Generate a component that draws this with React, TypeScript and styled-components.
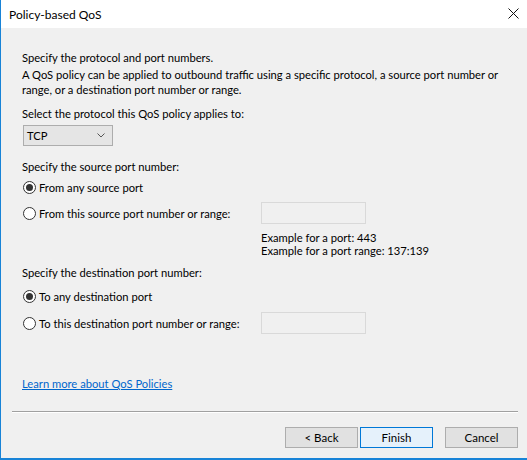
import React from "react";
import styled, { createGlobalStyle } from "styled-components";

const Global = createGlobalStyle`
  html, body { margin: 0; padding: 0; background: #ffffff; }
  body { font-family: Lato, "Noto Sans", sans-serif; font-size: 11.2px; color: #000; }
  * { box-sizing: border-box; }
`;

const Window = styled.div`
  width: 527px;
  height: 460px;
  display: flex;
  flex-direction: column;
  border-left: 1px solid #1883d7;
  border-bottom: 2px solid #1883d7;
  background: #f0f0f0;
  overflow: hidden;
`;

const TitleBar = styled.div`
  height: 28px;
  flex: none;
  background: #ffffff;
  display: flex;
  align-items: center;
  justify-content: space-between;
  padding: 0 8px 0 8px;
`;

const Title = styled.span`
  font-size: 12px;
  color: #000;
`;

const Close = styled.button`
  width: 12px;
  height: 12px;
  padding: 0;
  border: none;
  background: transparent;
  display: flex;
  align-items: center;
  justify-content: center;
  margin-top: -2px;
`;

const Content = styled.div`
  flex: 1;
  display: flex;
  flex-direction: column;
  padding: 0 0 0 21px;
`;

const Text = styled.div<{ $mt: number }>`
  margin-top: ${(p) => p.$mt}px;
  line-height: 15px;
  white-space: nowrap;
`;

const Combo = styled.div<{ $mt: number }>`
  margin-top: ${(p) => p.$mt}px;
  margin-left: 1px;
  width: 90px;
  height: 21px;
  border: 1px solid #adadad;
  background: #e5e5e5;
  display: flex;
  align-items: center;
  justify-content: space-between;
  padding: 0 7px 0 3px;
`;

const RadioRow = styled.div<{ $mt: number }>`
  margin-top: ${(p) => p.$mt}px;
  display: flex;
  align-items: center;
  min-height: 15px;
  line-height: 15px;
`;

const RadioLabel = styled.label`
  display: flex;
  align-items: center;
  flex: none;
  width: 238px;
  white-space: nowrap;
`;

const RadioCircle = styled.span<{ $on?: boolean }>`
  width: 13px;
  height: 13px;
  border-radius: 50%;
  border: 1px solid #333333;
  background: #ffffff;
  margin: 0 3px 0 1px;
  display: flex;
  align-items: center;
  justify-content: center;
  flex: none;
  &::after {
    content: "";
    display: ${(p) => (p.$on ? "block" : "none")};
    width: 7px;
    height: 7px;
    border-radius: 50%;
    background: #333333;
  }
`;

const TextBox = styled.div`
  width: 105px;
  height: 22px;
  flex: none;
  border: 1px solid #d9d9d9;
  background: #f0f0f0;
  margin-left: 1px;
`;

const Examples = styled.div<{ $mt: number }>`
  margin-top: ${(p) => p.$mt}px;
  margin-left: 239px;
  line-height: 13px;
  white-space: nowrap;
`;

const Link = styled.a<{ $mt: number }>`
  margin-top: ${(p) => p.$mt}px;
  line-height: 15px;
  color: #0066cc;
  text-decoration: underline;
  align-self: flex-start;
  cursor: pointer;
`;

const Footer = styled.div`
  flex: none;
  display: flex;
  flex-direction: column;
  padding: 0 9px 0 11px;
`;

const Separator = styled.div`
  height: 1px;
  background: #a0a0a0;
  border-bottom: 1px solid #ffffff;
  box-sizing: content-box;
`;

const ButtonRow = styled.div`
  display: flex;
  justify-content: flex-end;
  margin-top: 14px;
  margin-bottom: 10px;
`;

const Button = styled.button<{ $primary?: boolean; $ml?: number }>`
  width: 73px;
  height: 21px;
  margin-left: ${(p) => p.$ml ?? 0}px;
  border: 1px solid ${(p) => (p.$primary ? "#0078d7" : "#adadad")};
  background: ${(p) => (p.$primary ? "#e5f1fb" : "#e1e1e1")};
  font-family: inherit;
  font-size: 11.5px;
  color: #000;
  padding: 0;
  line-height: 19px;
`;

export default function App() {
  return (
    <>
      <Global />
      <Window>
        <TitleBar>
          <Title>Policy-based QoS</Title>
          <Close aria-label="Close">
            <svg width="11" height="11" viewBox="0 0 11 11">
              <path d="M0.5 0.5 L10.5 10.5 M10.5 0.5 L0.5 10.5" stroke="#111" strokeWidth="1" fill="none" />
            </svg>
          </Close>
        </TitleBar>
        <Content>
          <Text $mt={22}>Specify the protocol and port numbers.</Text>
          <Text $mt={2}>
            A QoS policy can be applied to outbound traffic using a specific protocol, a source port number or
            <br />
            range, or a destination port number or range.
          </Text>
          <Text $mt={9}>Select the protocol this QoS policy applies to:</Text>
          <Combo $mt={4}>
            <span>TCP</span>
            <svg width="8" height="5" viewBox="0 0 8 5">
              <path d="M0.5 0.5 L4 4 L7.5 0.5" stroke="#555" strokeWidth="1" fill="none" />
            </svg>
          </Combo>
          <Text $mt={13}>Specify the source port number:</Text>
          <RadioRow $mt={6}>
            <RadioLabel>
              <RadioCircle $on />
              From any source port
            </RadioLabel>
          </RadioRow>
          <RadioRow $mt={7}>
            <RadioLabel>
              <RadioCircle />
              From this source port number or range:
            </RadioLabel>
            <TextBox />
          </RadioRow>
          <Examples $mt={7}>
            Example for a port: 443
            <br />
            Example for a port range: 137:139
          </Examples>
          <Text $mt={8}>Specify the destination port number:</Text>
          <RadioRow $mt={9}>
            <RadioLabel>
              <RadioCircle $on />
              To any destination port
            </RadioLabel>
          </RadioRow>
          <RadioRow $mt={8}>
            <RadioLabel>
              <RadioCircle />
              To this destination port number or range:
            </RadioLabel>
            <TextBox />
          </RadioRow>
          <Link $mt={42}>Learn more about QoS Policies</Link>
        </Content>
        <Footer>
          <Separator />
          <ButtonRow>
            <Button>&lt; Back</Button>
            <Button $primary $ml={2}>Finish</Button>
            <Button $ml={12}>Cancel</Button>
          </ButtonRow>
        </Footer>
      </Window>
    </>
  );
}
